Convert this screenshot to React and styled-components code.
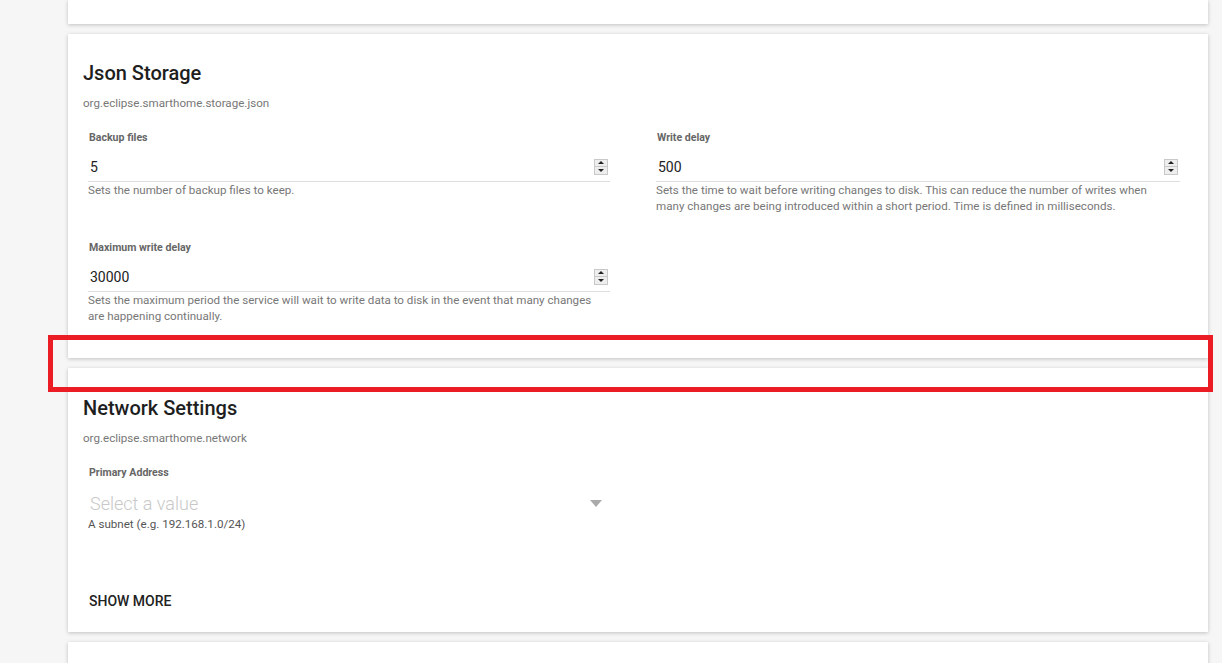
import React from "react"
import styled, { createGlobalStyle } from "styled-components"

const GlobalStyle = createGlobalStyle`
  html, body {
    margin: 0;
    padding: 0;
    background: #f6f6f6;
    font-family: Roboto, "Noto Sans", Arial, sans-serif;
    overflow: hidden;
  }
`

const Page = styled.div`
  position: relative;
  width: 1222px;
  height: 663px;
  overflow: hidden;
  padding-left: 68px;
  box-sizing: border-box;
`

const Stack = styled.div`
  width: 1140px;
  display: flex;
  flex-direction: column;
  gap: 10px;
`

const Card = styled.section`
  background: #fff;
  box-shadow: 0 1px 4px rgba(0, 0, 0, 0.22);
  box-sizing: border-box;
  padding: ${p => p.$pad || "27px 15px 34px"};
  height: ${p => p.$height || "auto"};
`

const Title = styled.h2`
  margin: 0;
  font-size: 20px;
  line-height: 24px;
  font-weight: 500;
  color: #1e1e1e;
`

const Pid = styled.div`
  margin-top: 10px;
  font-size: 11.6px;
  line-height: 16px;
  color: #777;
`

const Fields = styled.div`
  margin-top: 19px;
  display: grid;
  grid-template-columns: 522px 524px;
  column-gap: 46px;
  row-gap: 26px;
  padding-left: 5px;
  align-items: start;
`

const Field = styled.div`
  display: flex;
  flex-direction: column;
`

const Label = styled.label`
  padding-left: 1px;
  font-size: 10.6px;
  line-height: 16px;
  font-weight: 700;
  color: #666;
`

const InputRow = styled.div`
  margin-top: 6px;
  height: 29px;
  border-bottom: 1px solid #dedede;
  display: flex;
  align-items: center;
  justify-content: space-between;
  padding: 0 2px 0 2px;
`

const Value = styled.span`
  font-size: 14px;
  color: #222;
`

const Spinner = styled.span`
  width: 12px;
  height: 14px;
  border: 1px solid #c9c9c9;
  background: #eee;
  display: flex;
  flex-direction: column;
`

const SpinHalf = styled.span`
  flex: 1;
  display: flex;
  align-items: center;
  justify-content: center;
  & + & {
    border-top: 1px solid #c9c9c9;
  }
  &::before {
    content: "";
    border-left: 3px solid transparent;
    border-right: 3px solid transparent;
    ${p => (p.$down ? "border-top: 3px solid #222;" : "border-bottom: 3px solid #222;")}
  }
`

const Help = styled.div`
  padding-right: 4px;
  font-size: 11.6px;
  line-height: 16px;
  color: #777;
`

const SelectRow = styled.div`
  height: 34px;
  display: flex;
  align-items: center;
  justify-content: space-between;
  padding: 0 8px 0 2px;
`

const Placeholder = styled.span`
  font-size: 18px;
  line-height: 22px;
  font-weight: 300;
  color: #c8c8c8;
  align-self: flex-end;
`

const Caret = styled.span`
  width: 0;
  height: 0;
  border-left: 6px solid transparent;
  border-right: 6px solid transparent;
  border-top: 7px solid #aaa;
  margin-top: 10px;
`

const SubnetHelp = styled(Help)`
  margin-top: 1px;
  color: #555;
`

const ShowMore = styled.button`
  margin-top: 59px;
  margin-left: 6px;
  padding: 0;
  border: 0;
  background: none;
  font-family: inherit;
  font-size: 14px;
  line-height: 20px;
  font-weight: 500;
  color: #222;
  text-transform: uppercase;
  cursor: pointer;
`

const Highlight = styled.div`
  position: absolute;
  left: 48px;
  top: 335px;
  width: 1165px;
  height: 57px;
  box-sizing: border-box;
  border: 5px solid #ec1c24;
  pointer-events: none;
`

const NumberInput = ({ label, value, help }) => (
  <Field>
    <Label>{label}</Label>
    <InputRow>
      <Value>{value}</Value>
      <Spinner>
        <SpinHalf />
        <SpinHalf $down />
      </Spinner>
    </InputRow>
    <Help>{help}</Help>
  </Field>
)

const App = () => (
  <Page>
    <GlobalStyle />
    <Stack>
      <Card $pad="0" $height="24px" />
      <Card>
        <Title>Json Storage</Title>
        <Pid>org.eclipse.smarthome.storage.json</Pid>
        <Fields>
          <NumberInput
            label="Backup files"
            value="5"
            help="Sets the number of backup files to keep."
          />
          <NumberInput
            label="Write delay"
            value="500"
            help="Sets the time to wait before writing changes to disk. This can reduce the number of writes when many changes are being introduced within a short period. Time is defined in milliseconds."
          />
          <NumberInput
            label="Maximum write delay"
            value="30000"
            help="Sets the maximum period the service will wait to write data to disk in the event that many changes are happening continually."
          />
        </Fields>
      </Card>
      <Card $pad="28px 15px 21px">
        <Title>Network Settings</Title>
        <Pid>org.eclipse.smarthome.network</Pid>
        <Fields>
          <Field>
            <Label>Primary Address</Label>
            <SelectRow>
              <Placeholder>Select a value</Placeholder>
              <Caret />
            </SelectRow>
            <SubnetHelp>A subnet (e.g. 192.168.1.0/24)</SubnetHelp>
          </Field>
        </Fields>
        <ShowMore>Show more</ShowMore>
      </Card>
      <Card $height="60px" />
    </Stack>
    <Highlight />
  </Page>
)

export default App
